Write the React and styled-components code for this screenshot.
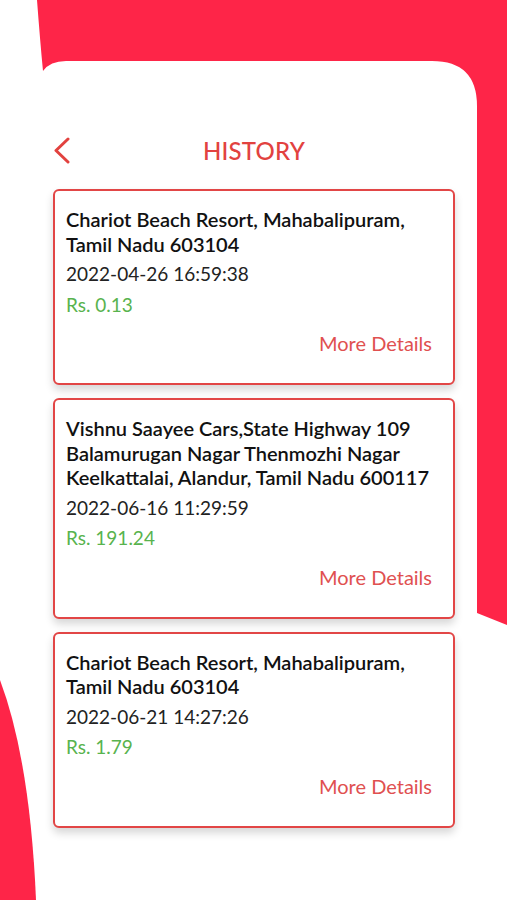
import styled, { createGlobalStyle } from 'styled-components'

const GlobalStyle = createGlobalStyle`
    body {
        margin: 0;
        background: #ffffff;
        font-family: Lato, "Liberation Sans", sans-serif;
    }
`

const history = [
    {
        address: 'Chariot Beach Resort, Mahabalipuram, Tamil Nadu 603104',
        date: '2022-04-26 16:59:38',
        amount: 'Rs. 0.13',
    },
    {
        address: 'Vishnu Saayee Cars,State Highway 109 Balamurugan Nagar Thenmozhi Nagar Keelkattalai, Alandur, Tamil Nadu 600117',
        date: '2022-06-16 11:29:59',
        amount: 'Rs. 191.24',
    },
    {
        address: 'Chariot Beach Resort, Mahabalipuram, Tamil Nadu 603104',
        date: '2022-06-21 14:27:26',
        amount: 'Rs. 1.79',
    },
]

const Decor = () => (
    <Backdrop viewBox="0 0 507 900" width="507" height="900">
        <path
            d="M37 0 L507 0 L507 625 L477 613 L477 106 Q477 61 432 61 L66 61 Q50 61 43 71 Q40 40 37 0 Z"
            fill="#fe2548"
        />
        <path d="M0 680 Q30 760 36 900 L0 900 Z" fill="#fe2548" />
    </Backdrop>
)

const App = () => {
    return (
        <Screen>
            <GlobalStyle />
            <Decor />
            <Content>
                <Header>
                    <BackButton aria-label="back">
                        <svg width="18" height="27" viewBox="0 0 18 27">
                            <path d="M15 2 L3 13.5 L15 25" fill="none" stroke="#e2423f" strokeWidth="3" strokeLinecap="round" strokeLinejoin="round" />
                        </svg>
                    </BackButton>
                    <Title>HISTORY</Title>
                </Header>
                <List>
                    {history.map((item, id) => (
                        <Card key={id}>
                            <Address>{item.address}</Address>
                            <DateText>{item.date}</DateText>
                            <Amount>{item.amount}</Amount>
                            <MoreLink>More Details</MoreLink>
                        </Card>
                    ))}
                </List>
            </Content>
        </Screen>
    )
}

const Screen = styled.div`
    position: relative;
    width: 507px;
    height: 900px;
    overflow: hidden;
    background: #ffffff;
`

const Backdrop = styled.svg`
    position: absolute;
    top: 0;
    left: 0;
    z-index: 0;
`

const Content = styled.div`
    position: relative;
    z-index: 1;
    padding: 135px 52px 0 53px;
    display: flex;
    flex-direction: column;
    gap: 24px;
`

const Header = styled.div`
    display: grid;
    grid-template-columns: 1fr auto 1fr;
    align-items: center;
    height: 30px;
`

const BackButton = styled.div`
    display: flex;
    align-items: center;
    justify-self: start;
`

const Title = styled.h1`
    margin: 0;
    font-size: 24px;
    font-weight: 500;
    color: #e2423f;
    letter-spacing: 0.2px;
`

const List = styled.div`
    display: flex;
    flex-direction: column;
    gap: 13px;
`

const Card = styled.div`
    border: 2px solid #e24646;
    border-radius: 6px;
    background: #ffffff;
    box-shadow: 0 5px 8px rgba(0, 0, 0, 0.16);
    padding: 16px 21px 27px 11px;
    display: flex;
    flex-direction: column;
`

const Address = styled.div`
    font-size: 20px;
    line-height: 24.5px;
    font-weight: 600;
    color: #111111;
`

const DateText = styled.div`
    margin-top: 5px;
    font-size: 19px;
    line-height: 25px;
    color: #222222;
`

const Amount = styled.div`
    margin-top: 5.5px;
    font-size: 19px;
    line-height: 25px;
    color: #58b34e;
`

const MoreLink = styled.div`
    margin-top: 14.5px;
    align-self: flex-end;
    font-size: 20px;
    line-height: 25px;
    color: #e05050;
    cursor: pointer;
`

export default App
